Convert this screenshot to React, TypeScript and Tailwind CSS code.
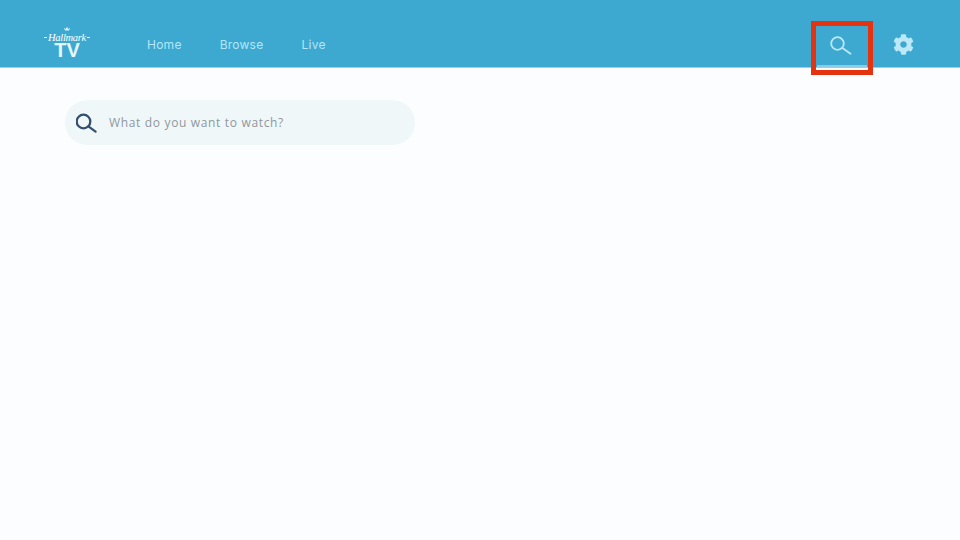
import { FaCog } from "react-icons/fa";

function SearchIcon({ className, r, width, handle }: { className: string; r: number; width: number; handle: string }) {
  return (
    <svg width="24" height="24" viewBox="0 0 24 24" fill="none" stroke="currentColor" strokeWidth={width} strokeLinecap="round" className={className}>
      <circle cx="7.5" cy="10.5" r={r} />
      <path d={handle} />
    </svg>
  );
}

function Logo() {
  return (
    <div className="flex w-[44px] flex-col items-center text-white">
      <svg width="8" height="6" viewBox="0 0 10 7">
        <path d="M1 2 L2.6 5.5 H7.4 L9 2 L6.6 3.6 L5 0.8 L3.4 3.6 Z" fill="#d8f0fa" />
      </svg>
      <div className="flex h-[11px] items-center gap-[1px]">
        <span className="h-px w-[3px] bg-white" />
        <span className="whitespace-nowrap font-['Liberation_Serif',serif] text-[10.5px] italic leading-[11px] tracking-[-0.3px]">
          Hallmark
        </span>
        <span className="h-px w-[3px] bg-white" />
      </div>
      <span className="font-['Liberation_Sans',sans-serif] text-[20px] font-bold leading-[15px] text-[#e6f7fd]">TV</span>
    </div>
  );
}

export default function App() {
  return (
    <div className="relative h-[540px] w-[960px] overflow-hidden bg-[#fbfdff] font-['Inter',sans-serif]">
      <header className="flex h-[68px] items-center border-b border-[#8fd4ec] bg-[#3da9d1] pl-[45px] pr-[46px] pt-[22px]">
        <div className="mt-[-6px]">
          <Logo />
        </div>
        <nav className="ml-[58px] flex items-center gap-[38px] text-[12px] tracking-[0.25px] text-[#b5e6f7]">
          <span>Home</span>
          <span>Browse</span>
          <span>Live</span>
        </nav>
        <div className="ml-auto flex items-center gap-[26px] text-[#bce8f8]">
          <div className="relative flex h-[44px] w-[50px] items-center justify-center">
            <SearchIcon className="" r={6.3} width={1.8} handle="M12.4 15 L20.5 20.8" />
            <div className="absolute bottom-0 left-0 right-0 h-[2px] bg-[#8ccbe4]" />
          </div>
          <FaCog size={21} />
        </div>
      </header>
      <div className="absolute left-[811px] top-[21px] h-[54px] w-[62px] border-[5px] border-[#e5330f]" />
      <main className="pl-[65px] pt-[32px]">
        <div className="flex h-[45px] w-[350px] items-center rounded-full bg-[#f0f7f8] pl-[11px]">
          <SearchIcon className="text-[#34506e]" r={6.8} width={2.3} handle="M12.4 15.4 L19.6 20.6" />
          <span className="ml-[9px] font-['Open_Sans',sans-serif] text-[12px] tracking-[0.66px] text-[#8f979f]">
            What do you want to watch?
          </span>
        </div>
      </main>
    </div>
  );
}
